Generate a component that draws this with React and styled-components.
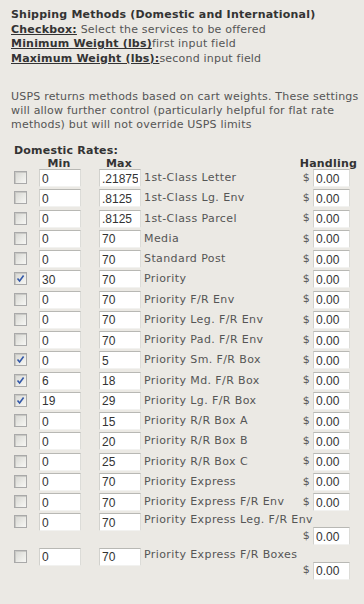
import React from 'react';
import styled, { createGlobalStyle } from 'styled-components';

const GlobalStyle = createGlobalStyle`
  body {
    margin: 0;
    background: #ebe9e4;
  }
`;

const rates = [
  { checked: false, min: '0', max: '.21875', name: '1st-Class Letter' },
  { checked: false, min: '0', max: '.8125', name: '1st-Class Lg. Env' },
  { checked: false, min: '0', max: '.8125', name: '1st-Class Parcel' },
  { checked: false, min: '0', max: '70', name: 'Media' },
  { checked: false, min: '0', max: '70', name: 'Standard Post' },
  { checked: true, min: '30', max: '70', name: 'Priority' },
  { checked: false, min: '0', max: '70', name: 'Priority F/R Env' },
  { checked: false, min: '0', max: '70', name: 'Priority Leg. F/R Env' },
  { checked: false, min: '0', max: '70', name: 'Priority Pad. F/R Env' },
  { checked: true, min: '0', max: '5', name: 'Priority Sm. F/R Box' },
  { checked: true, min: '6', max: '18', name: 'Priority Md. F/R Box' },
  { checked: true, min: '19', max: '29', name: 'Priority Lg. F/R Box' },
  { checked: false, min: '0', max: '15', name: 'Priority R/R Box A' },
  { checked: false, min: '0', max: '20', name: 'Priority R/R Box B' },
  { checked: false, min: '0', max: '25', name: 'Priority R/R Box C' },
  { checked: false, min: '0', max: '70', name: 'Priority Express' },
  { checked: false, min: '0', max: '70', name: 'Priority Express F/R Env' },
  { checked: false, min: '0', max: '70', name: 'Priority Express Leg. F/R Env', stacked: true },
  { checked: false, min: '0', max: '70', name: 'Priority Express F/R Boxes', stacked: true },
];

const Checkbox = ({ checked }) => (
  <Box>
    {checked && (
      <svg width="9" height="9" viewBox="0 0 9 9">
        <path d="M1.5 4.5 L3.6 7 L7.6 1.6" fill="none" stroke="#3358a8" strokeWidth="1.6" />
      </svg>
    )}
  </Box>
);

const App = () => (
  <>
    <GlobalStyle />
    <Page>
      <Intro>
        <Title>Shipping Methods (Domestic and International)</Title>
        <div><Term>Checkbox:</Term> Select the services to be offered</div>
        <div><Term>Minimum Weight (lbs)</Term>first input field</div>
        <div><Term>Maximum Weight (lbs):</Term>second input field</div>
      </Intro>
      <Note>
        USPS returns methods based on cart weights. These settings<br />
        will allow further control (particularly helpful for flat rate<br />
        methods) but will not override USPS limits
      </Note>
      <Rates>
        <SectionTitle>Domestic Rates:</SectionTitle>
        <HeadRow>
          <span />
          <ColHead>Min</ColHead>
          <ColHead>Max</ColHead>
          <ColHead align="right">Handling</ColHead>
        </HeadRow>
        {rates.map((r) => (
          <Row key={r.name}>
            <Checkbox checked={r.checked} />
            <WeightInput defaultValue={r.min} />
            <WeightInput defaultValue={r.max} />
            <Service>
              <ServiceName stacked={r.stacked}>{r.name}</ServiceName>
              <Handling>
                <Dollar>$</Dollar>
                <HandlingInput defaultValue="0.00" />
              </Handling>
            </Service>
          </Row>
        ))}
      </Rates>
    </Page>
  </>
);

export default App;

const Page = styled.div`
  min-height: 604px;
  box-sizing: border-box;
  padding: 8px 4px 0 11px;
  background: #ebe9e4;
  font-family: 'DejaVu Sans', Verdana, sans-serif;
  font-size: 11px;
  letter-spacing: 0.2px;
  line-height: 14.5px;
  color: #555;
`;

const Intro = styled.div`
  color: #555;
`;

const Title = styled.div`
  font-weight: bold;
  color: #333;
`;

const Term = styled.span`
  font-weight: bold;
  color: #333;
  text-decoration: underline;
`;

const Note = styled.p`
  margin: 24px 0 0;
  line-height: 14px;
  white-space: nowrap;
`;

const Rates = styled.div`
  margin: 12px 0 0 3px;
  width: 343px;
`;

const SectionTitle = styled.div`
  font-weight: bold;
  color: #333;
  line-height: 14px;
`;

const grid = `
  display: grid;
  grid-template-columns: 25px 60px 44px 1fr;
`;

const HeadRow = styled.div`
  ${grid}
  height: 11px;
  line-height: 11px;
`;

const ColHead = styled.div`
  font-weight: bold;
  color: #333;
  text-align: ${(p) => p.align || 'center'};
  justify-self: ${(p) => (p.align === 'right' ? 'end' : 'start')};
  width: ${(p) => (p.align === 'right' ? 'auto' : '40px')};
`;

const Row = styled.div`
  ${grid}
  align-items: start;
  margin-bottom: 2.25px;
`;

const Box = styled.span`
  box-sizing: border-box;
  width: 13px;
  height: 13px;
  margin-top: 2px;
  display: flex;
  align-items: center;
  justify-content: center;
  border: 1px solid #a9a9a9;
  background: linear-gradient(135deg, #d6d6d2 0%, #eeeeea 70%, #f6f6f4 100%);
  box-shadow: inset 1px 1px 0 #c8c8c4;
`;

const inputBase = `
  box-sizing: border-box;
  height: 18px;
  margin: 0;
  padding: 1px 2px 0;
  border: 1px solid;
  border-color: #b8b8b4 #dcdcd8 #f2f2f0 #d2d2ce;
  background: #fff;
  color: #333;
  font-family: 'Liberation Sans Narrow', 'Arial Narrow', 'Liberation Sans', sans-serif;
  font-size: 12px;
  letter-spacing: 0;
  outline: none;
`;

const WeightInput = styled.input`
  ${inputBase}
  width: 42px;
`;

const Service = styled.div`
  display: flex;
  flex-wrap: wrap;
  align-items: center;
  min-height: 18px;
`;

const ServiceName = styled.span`
  padding-left: 1px;
  letter-spacing: 0.4px;
  line-height: ${(p) => (p.stacked ? '14px' : '18px')};
  flex-basis: ${(p) => (p.stacked ? '100%' : 'auto')};
  white-space: nowrap;
`;

const Handling = styled.span`
  display: flex;
  align-items: center;
  margin-left: auto;
  padding-right: 7px;
`;

const Dollar = styled.span`
  margin-right: 3px;
`;

const HandlingInput = styled.input`
  ${inputBase}
  width: 37px;
`;
